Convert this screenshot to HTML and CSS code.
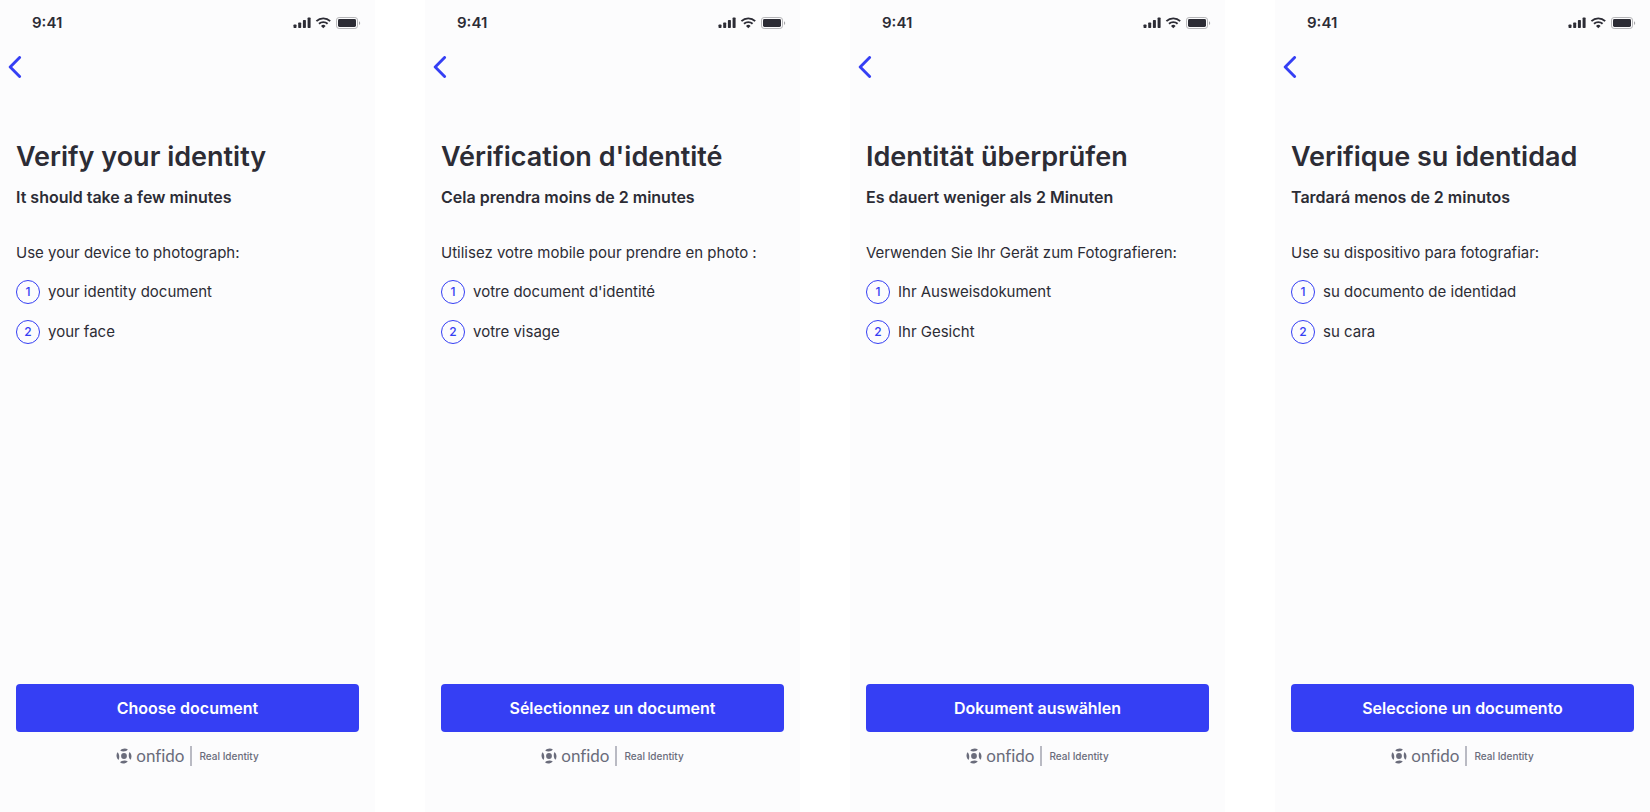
FILE: index.html
```html
<!DOCTYPE html>
<html lang="en">
<head>
<meta charset="utf-8">
<meta name="viewport" content="width=device-width, initial-scale=1">
<title>Verify your identity</title>
<link rel="stylesheet" href="styles.css">
</head>
<body>
<svg class="sprite" aria-hidden="true">
  <symbol id="status" viewBox="0 0 68 12">
    <rect x="0.5" y="7.5" width="3" height="3.5" rx="0.7"/>
    <rect x="5.2" y="5.5" width="3" height="5.5" rx="0.7"/>
    <rect x="9.9" y="3" width="3" height="8" rx="0.7"/>
    <rect x="14.6" y="0.6" width="3" height="10.4" rx="0.7"/>
    <path d="M23.4 4.1a10 10 0 0 1 13.8 0M26 6.8a6.3 6.3 0 0 1 8.6 0" fill="none" stroke="currentColor" stroke-width="1.9"/>
    <path d="M28 8.9a3.4 3.4 0 0 1 4.6 0l-2.3 2.3z"/>
    <rect x="43.5" y="0.5" width="21" height="11" rx="2.6" fill="none" stroke="#b5b5b8"/>
    <rect x="45" y="2" width="18" height="8" rx="1.4"/>
    <path d="M66 4.2v3.8c1.6-.7 1.6-3.1 0-3.8z" fill="#a5a5a9"/>
  </symbol>
  <symbol id="back" viewBox="0 0 14 22">
    <path d="M11.6 1.5 2.2 11l9.4 9.5" fill="none" stroke="currentColor" stroke-width="2.9" stroke-linecap="round" stroke-linejoin="round"/>
  </symbol>
  <symbol id="mark" viewBox="0 0 16 16">
    <circle cx="8" cy="8" r="2.9"/>
    <path d="M4.200 2.500C6.200.3 9.500-.1 11.900 1.500 10.700 3.500 6.500 4.100 4.200 2.500z"/>
    <path d="M11.800 13.500c-2 2.200-5.300 2.600-7.700 1 1.200-2 5.400-2.600 7.700-1z"/>
    <path d="M1.500 4.300c1.800 1.300 2.400 5.400 1 7.600C.3 10-.1 6.600 1.500 4.300z"/>
    <path d="M14.500 11.700c-1.800-1.300-2.400-5.400-1-7.600 2.200 1.900 2.600 5.300 1 7.600z"/>
  </symbol>
</svg>
<main class="screens">
  <section class="screen" lang="en">
    <header class="status"><span>9:41</span><svg class="status-icons" aria-hidden="true"><use href="#status"/></svg></header>
    <nav class="nav"><button class="back" type="button" aria-label="Back"><svg class="back-icon" aria-hidden="true"><use href="#back"/></svg></button></nav>
    <h1 class="title">Verify your identity</h1>
    <p class="subtitle">It should take a few minutes</p>
    <p class="intro">Use your device to photograph:</p>
    <ol class="steps">
      <li class="step"><span class="number">1</span>your identity document</li>
      <li class="step"><span class="number">2</span>your face</li>
    </ol>
    <button class="choose" type="button">Choose document</button>
    <footer class="brand"><svg class="mark" aria-hidden="true"><use href="#mark"/></svg><span class="name">onfido</span><span class="tagline">Real Identity</span></footer>
  </section>
  <section class="screen" lang="fr">
    <header class="status"><span>9:41</span><svg class="status-icons" aria-hidden="true"><use href="#status"/></svg></header>
    <nav class="nav"><button class="back" type="button" aria-label="Retour"><svg class="back-icon" aria-hidden="true"><use href="#back"/></svg></button></nav>
    <h1 class="title">Vérification d'identité</h1>
    <p class="subtitle">Cela prendra moins de 2 minutes</p>
    <p class="intro">Utilisez votre mobile pour prendre en photo :</p>
    <ol class="steps">
      <li class="step"><span class="number">1</span>votre document d'identité</li>
      <li class="step"><span class="number">2</span>votre visage</li>
    </ol>
    <button class="choose" type="button">Sélectionnez un document</button>
    <footer class="brand"><svg class="mark" aria-hidden="true"><use href="#mark"/></svg><span class="name">onfido</span><span class="tagline">Real Identity</span></footer>
  </section>
  <section class="screen" lang="de">
    <header class="status"><span>9:41</span><svg class="status-icons" aria-hidden="true"><use href="#status"/></svg></header>
    <nav class="nav"><button class="back" type="button" aria-label="Zurück"><svg class="back-icon" aria-hidden="true"><use href="#back"/></svg></button></nav>
    <h1 class="title">Identität überprüfen</h1>
    <p class="subtitle">Es dauert weniger als 2 Minuten</p>
    <p class="intro">Verwenden Sie Ihr Gerät zum Fotografieren:</p>
    <ol class="steps">
      <li class="step"><span class="number">1</span>Ihr Ausweisdokument</li>
      <li class="step"><span class="number">2</span>Ihr Gesicht</li>
    </ol>
    <button class="choose" type="button">Dokument auswählen</button>
    <footer class="brand"><svg class="mark" aria-hidden="true"><use href="#mark"/></svg><span class="name">onfido</span><span class="tagline">Real Identity</span></footer>
  </section>
  <section class="screen" lang="es">
    <header class="status"><span>9:41</span><svg class="status-icons" aria-hidden="true"><use href="#status"/></svg></header>
    <nav class="nav"><button class="back" type="button" aria-label="Atrás"><svg class="back-icon" aria-hidden="true"><use href="#back"/></svg></button></nav>
    <h1 class="title">Verifique su identidad</h1>
    <p class="subtitle">Tardará menos de 2 minutos</p>
    <p class="intro">Use su dispositivo para fotografiar:</p>
    <ol class="steps">
      <li class="step"><span class="number">1</span>su documento de identidad</li>
      <li class="step"><span class="number">2</span>su cara</li>
    </ol>
    <button class="choose" type="button">Seleccione un documento</button>
    <footer class="brand"><svg class="mark" aria-hidden="true"><use href="#mark"/></svg><span class="name">onfido</span><span class="tagline">Real Identity</span></footer>
  </section>
</main>
</body>
</html>
```
FILE: styles.css
```css
* {
  box-sizing: border-box;
}

body {
  margin: 0;
  background: #fff;
  color: #2c2c35;
  font-family: Inter, "Liberation Sans", sans-serif;
  font-size: 15px;
  line-height: 24px;
}

button {
  border: 0;
  padding: 0;
  font: inherit;
  cursor: pointer;
}

.sprite {
  display: none;
}

.screens {
  display: grid;
  grid-template-columns: repeat(4, minmax(0, 1fr));
  gap: 50px;
  min-height: 100vh;
}

.screen {
  display: flex;
  flex-direction: column;
  padding: 0 16px 46px;
  background: #fcfcfd;
}

.status {
  display: flex;
  align-items: center;
  justify-content: space-between;
  height: 46px;
  margin-right: -2px;
  padding-left: 16px;
  font-size: 15px;
  font-weight: 600;
}

.status-icons {
  width: 68px;
  height: 12px;
  fill: currentColor;
}

.nav {
  display: flex;
  align-items: center;
  height: 42px;
  margin-left: -8px;
}

.back {
  display: flex;
  background: none;
  color: #353ff4;
}

.back-icon {
  width: 14px;
  height: 22px;
}

.title {
  margin: 51px 0 0;
  font-size: 27px;
  line-height: 36px;
  font-weight: 600;
}

.subtitle {
  margin: 10px 0 0;
  font-size: 16px;
  font-weight: 600;
}

.intro {
  margin: 32px 0 0;
}

.steps {
  display: grid;
  gap: 16px;
  margin: 15px 0 auto;
  padding: 0;
  list-style: none;
}

.step {
  display: flex;
  align-items: center;
  gap: 8px;
}

.number {
  display: flex;
  align-items: center;
  justify-content: center;
  width: 24px;
  height: 24px;
  border: 1px solid #353ff4;
  border-radius: 50%;
  color: #353ff4;
  font-size: 12px;
  font-weight: 500;
}

.choose {
  height: 48px;
  border-radius: 4px;
  background: #353ff4;
  color: #fff;
  font-size: 16px;
  font-weight: 600;
}

.brand {
  display: flex;
  align-items: center;
  justify-content: center;
  height: 20px;
  margin-top: 14px;
  color: #6a6c7b;
}

.mark {
  width: 16px;
  height: 16px;
  margin-right: 4px;
  fill: currentColor;
}

.name {
  font-family: Lato, sans-serif;
  font-size: 17px;
  font-variant-ligatures: none;
  line-height: 20px;
}

.tagline {
  margin-left: 6px;
  padding-left: 7px;
  border-left: 2px solid #b9bac3;
  font-size: 10px;
  line-height: 20px;
  font-weight: 500;
}
```
